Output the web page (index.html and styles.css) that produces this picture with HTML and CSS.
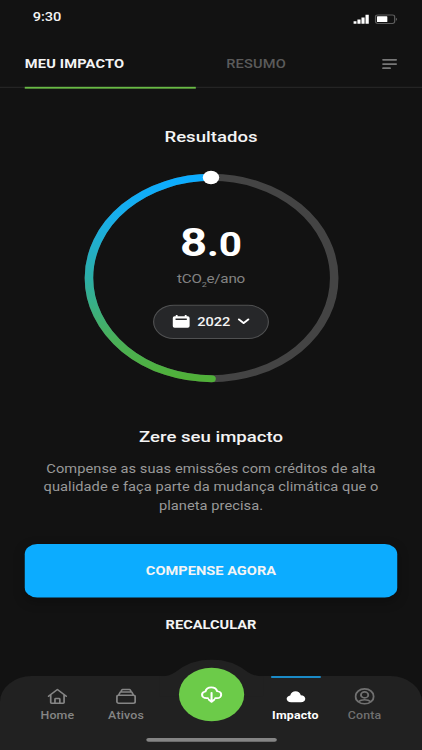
FILE: index.html
```html
<!DOCTYPE html>
<html lang="pt-BR">
<head>
<meta charset="utf-8">
<title>Meu impacto</title>
<link rel="stylesheet" href="styles.css">
</head>
<body>
<div class="screen">
  <header class="status">
    <span class="time">9:30</span>
    <svg class="signal" width="39" height="12" viewBox="0 0 39 12">
      <path fill="#fff" d="M0 8h2.8v2.6H0zM3.6 6h2.8v4.6H3.6zM7.2 4H10v6.6H7.2zM10.8 1h2.9v9.6h-2.9z"/>
      <rect x="19.7" y="1.2" width="17" height="9.2" rx="2" fill="none" stroke="#5c5c5c" stroke-width="1.1"/>
      <rect x="21" y="2.7" width="9.2" height="6.2" rx=".6" fill="#fff"/>
      <path d="M37.8 4.2v3.2q1-.5 1-1.6t-1-1.6z" fill="#5c5c5c"/>
    </svg>
  </header>
  <nav class="tabs">
    <span class="tab active">MEU IMPACTO</span>
    <span class="tab">RESUMO</span>
    <svg class="menu" width="14" height="12" viewBox="0 0 14 12">
      <path d="M1.500 1.700h11.400M1.500 6.300h11.400M1.500 10.800h6" stroke="#777" stroke-width="1.900" stroke-linecap="round"/>
    </svg>
  </nav>
  <main>
    <h1>Resultados</h1>
    <section class="gauge">
      <svg class="ring" width="234" height="234" viewBox="0 0 234 234">
        <defs>
          <linearGradient id="impact" gradientUnits="userSpaceOnUse" x1="0" y1="8" x2="0" y2="226">
            <stop offset="0" stop-color="#0cacff"/>
            <stop offset=".2" stop-color="#18aeea"/>
            <stop offset=".5" stop-color="#2caea6"/>
            <stop offset=".8" stop-color="#49b05a"/>
            <stop offset="1" stop-color="#50b038"/>
          </linearGradient>
        </defs>
        <circle cx="117" cy="117" r="109" fill="none" stroke="#444" stroke-width="7.6"/>
        <path d="M117 8a109 109 0 0 0 0 218" fill="none" stroke="url(#impact)" stroke-width="7.6" stroke-linecap="round"/>
        <circle cx="116.500" cy="8.200" r="7.300" fill="#fff"/>
      </svg>
      <div class="reading">
        <div class="value">8<span class="decimal">.0</span></div>
        <div class="unit">tCO<span class="sub">2</span>e/ano</div>
        <button class="year">
          <svg width="16" height="16" viewBox="0 0 16 16">
            <path fill="#fff" fill-rule="evenodd" d="M3.2 1h1.6v1.5h6.4V1h1.6v1.5h1q1.7 0 1.7 1.7v8.9q0 1.7-1.7 1.7H2.2Q.5 14.800.5 13.100V4.200Q.5 2.500 2.200 2.500h1zM3 4.900v1.600h10V4.900z"/>
          </svg>
          <span>2022</span>
          <svg class="chevron" width="11" height="8" viewBox="0 0 11 8">
            <path d="M1.300 1.900 5.500 5.900 9.700 1.900" fill="none" stroke="#fff" stroke-width="1.900" stroke-linecap="round" stroke-linejoin="round"/>
          </svg>
        </button>
      </div>
    </section>
    <h2>Zere seu impacto</h2>
    <p>Compense as suas emissões com créditos de alta<br>qualidade e faça parte da mudança climática que o<br>planeta precisa.</p>
    <button class="primary">COMPENSE AGORA</button>
    <button class="secondary">RECALCULAR</button>
  </main>
  <footer class="dock">
    <svg class="bump" width="92" height="40" viewBox="0 0 92 40">
      <path fill="#212121" d="M0 18.500Q8 18.500 14 13.500Q28 0 46 0T78 13.500Q84 18.500 92 18.500V40H0z"/>
    </svg>
    <div class="items">
      <a class="item">
        <svg class="icon" viewBox="0 0 20 20" fill="none" stroke="currentColor" stroke-width="1.700" stroke-linecap="round" stroke-linejoin="round">
          <path d="M1.200 9.800 10 1.800l8.800 8M3.400 8v9.300q0 .9.900.9h11.400q.9 0 .9-.9V8M7.600 18v-4.600q0-.9.900-.9h3q.9 0 .9.900V18"/>
        </svg>
        <span>Home</span>
      </a>
      <a class="item">
        <svg class="icon" viewBox="0 0 20 20" fill="none" stroke="currentColor" stroke-width="1.700" stroke-linejoin="round">
          <rect x="1" y="8.600" width="18" height="9.600" rx="1.800"/>
          <path d="M2.700 8.600 3.900 5.500q.3-.7 1-.7h10.200q.7 0 1 .7l1.200 3.100M4.800 4.800 5.800 2.300q.2-.6.900-.6h6.600q.7 0 .9.600l1 2.500"/>
        </svg>
        <span>Ativos</span>
      </a>
      <a class="item current">
        <svg class="icon" viewBox="0 0 20 20">
          <path fill="currentColor" d="M5.300 17.100C2.500 17.100.8 15.200.8 12.900c0-2 1.400-3.700 3.500-4C5.100 5.600 7.200 3.900 9.600 3.900c2.500 0 4.500 1.800 5.200 4.700 2.600.100 4.400 1.900 4.400 4.300s-1.800 4.200-4.300 4.200z"/>
        </svg>
        <span>Impacto</span>
      </a>
      <a class="item dim">
        <svg class="icon" viewBox="0 0 20 20" fill="none" stroke="currentColor" stroke-width="1.900">
          <circle cx="10" cy="10" r="9"/>
          <circle cx="10" cy="8.200" r="3.600"/>
          <path d="M3.800 16.500q2.400-2.500 6.200-2.500t6.200 2.500"/>
        </svg>
        <span>Conta</span>
      </a>
    </div>
    <div class="fab">
      <svg width="20" height="20" viewBox="0 0 22 22" fill="none" stroke="#fff" stroke-width="2" stroke-linecap="round" stroke-linejoin="round">
        <path d="M7.400 15.300H6C3.500 15.300 1.700 13.600 1.700 11.300c0-2.100 1.400-3.600 3.300-3.900C5.600 4.500 7.900 2.500 10.700 2.500c2.900 0 5 1.800 5.800 4.600 2.200.200 3.900 1.900 3.900 4.100s-1.700 4.100-4 4.100h-1.800M11 9v10.600M8.300 17l2.700 2.700 2.700-2.700"/>
      </svg>
    </div>
    <div class="handle"></div>
  </footer>
</div>
</body>
</html>
```
FILE: styles.css
```css
* { box-sizing: border-box; }
html, body { margin: 0; width: 422px; height: 750px; overflow: hidden; background: #121212; }
h1, h2, p { margin: 0; }
button { border: 0; padding: 0; font: inherit; color: inherit; }

/* 375x812 artboard fitted to the window */
.screen {
  width: 375px;
  height: 812px;
  margin-bottom: -62px;
  display: flex;
  flex-direction: column;
  transform: scale(1.12533, .9236);
  transform-origin: 0 0;
  background: #121212;
  color: #f4f4f4;
  font-family: Roboto, "Liberation Sans", sans-serif;
}

.status {
  height: 46px;
  padding: 10px 22px 0 29px;
  display: flex;
  justify-content: space-between;
}
.time { font-size: 13px; font-weight: 500; line-height: 18px; }
.signal { margin-top: 4.500px; }

.tabs {
  height: 49px;
  padding: 0 22px;
  display: flex;
  border-bottom: 1px solid #2c2c2c;
  font-size: 13px;
  font-weight: 500;
  line-height: 48px;
  letter-spacing: .15px;
  color: #5b5b5b;
}
.tab { width: 152px; height: 49.500px; }
.tab + .tab { padding-left: 27px; }
.active { color: #f4f4f4; border-bottom: 2px solid #69bb45; font-weight: 700; }
.menu { margin: 17px 0 0 auto; }

main {
  flex: 1;
  padding: 0 22px;
  display: flex;
  flex-direction: column;
  align-items: center;
  text-align: center;
}
h1, h2 { font-size: 16.500px; line-height: 20px; font-weight: 500; letter-spacing: 0; }
h1 { margin-top: 43.500px; }

.gauge { display: grid; margin-top: 25.500px; justify-items: center; }
.ring, .reading { grid-area: 1 / 1; }
.reading { display: flex; flex-direction: column; align-items: center; }
.value { margin-top: 55px; font-size: 42px; line-height: 48px; font-weight: 700; color: #fff; }
.decimal { font-size: 36px; }
.unit { margin-top: 1.500px; font-size: 13.500px; line-height: 20px; color: #838383; letter-spacing: -.2px; }
.sub { font-size: 8px; position: relative; top: 5px; }
.year {
  width: 103px;
  height: 37px;
  margin-top: 16px;
  display: flex;
  align-items: center;
  justify-content: center;
  gap: 6px;
  border: 1px solid #505152;
  border-radius: 19px;
  background: #262729;
  font-size: 13px;
  font-weight: 500;
}

h2 { margin-top: 46px; }
p { margin-top: 13.500px; font-size: 13px; line-height: 20px; letter-spacing: .05px; color: #999; white-space: nowrap; }
.primary {
  width: 331px;
  height: 58px;
  flex: none;
  margin-top: 31.500px;
  border-radius: 11px;
  background: #0cacff;
  box-shadow: 0 4px 10px #0004;
  font-size: 13px;
  font-weight: 700;
}
.secondary { margin-top: 19.500px; background: none; font-size: 13px; font-weight: 700; line-height: 20px; }

.dock {
  position: relative;
  height: 80px;
  flex: none;
  border-radius: 28px 28px 0 0;
  background: #212121;
}
.bump { position: absolute; left: 141.500px; top: -18px; }
.items {
  position: relative;
  display: flex;
  padding-left: 20.500px;
  color: #858585;
}
.item {
  width: 61px;
  height: 56px;
  padding-top: 13px;
  display: flex;
  flex-direction: column;
  align-items: center;
  font-size: 11px;
  font-weight: 500;
  line-height: 14px;
  letter-spacing: .15px;
}
.icon { width: 18px; height: 18px; }
.item span { margin-top: 4.500px; }
.current { width: 44px; margin-left: 98px; color: #fff; font-weight: 700; border-top: 2px solid #1b93d4; padding-top: 11px; }
.dim { margin-left: 9px; color: #707070; }
.fab {
  position: absolute;
  left: 158.500px;
  top: -9px;
  width: 58px;
  height: 58px;
  display: grid;
  place-items: center;
  border-radius: 50%;
  background: #6ccb49;
}
.handle { width: 116px; height: 3.500px; margin: 11px auto 0; border-radius: 2px; background: #858585; }
```
